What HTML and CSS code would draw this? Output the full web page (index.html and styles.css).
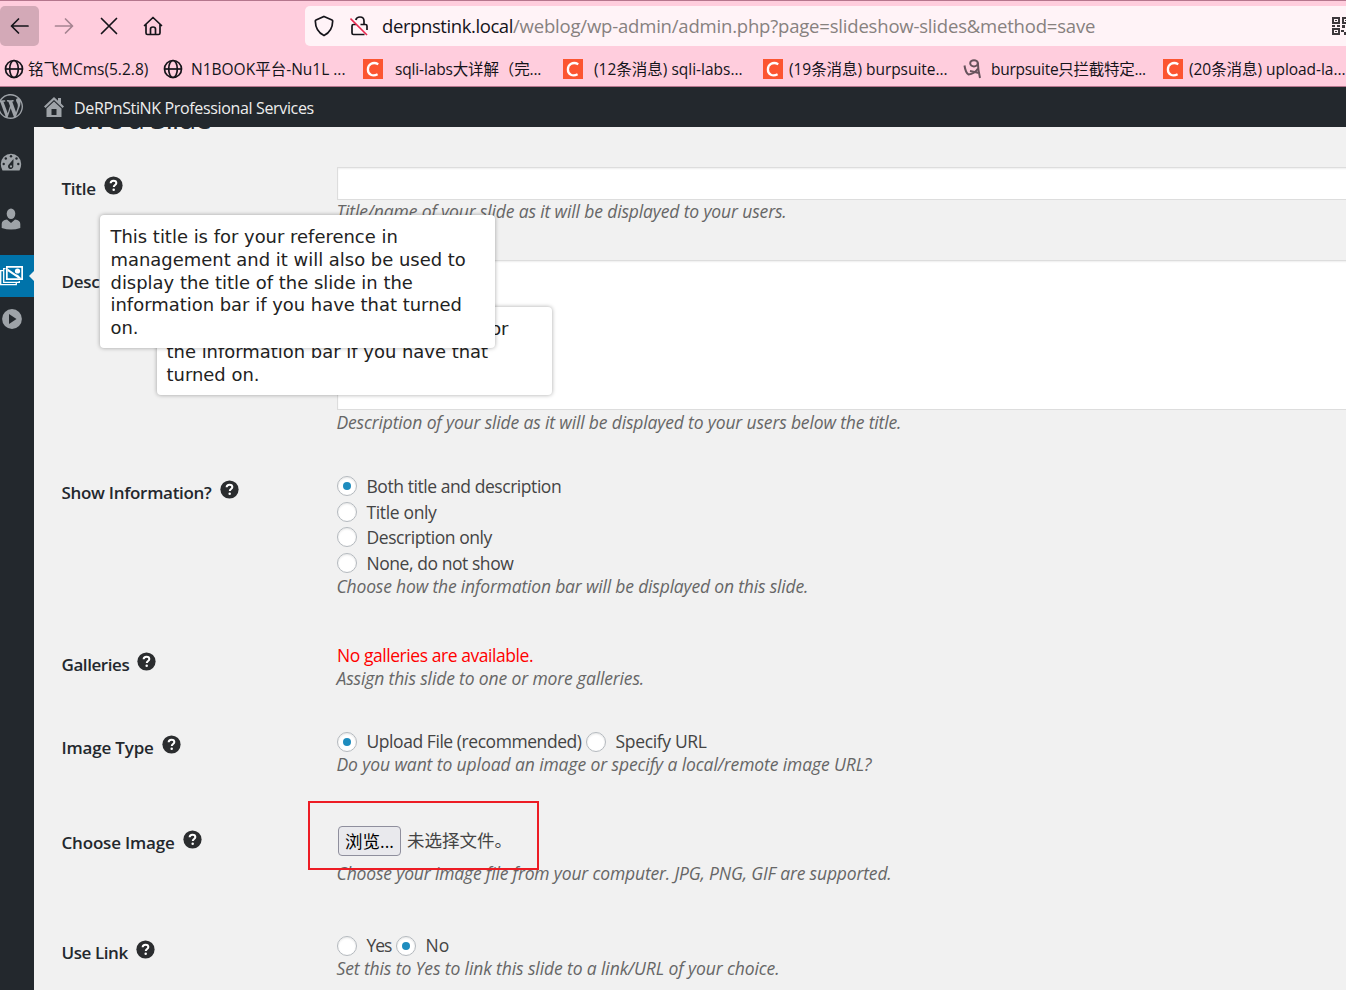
FILE: index.html
```html
<!DOCTYPE html>
<html lang="en">
<head>
<meta charset="utf-8">
<title>Save a Slide</title>
<link rel="stylesheet" href="styles.css">
</head>
<body>
<svg class="defs" width="0" height="0">
  <symbol id="help" viewBox="0 0 20 20"><circle cx="10" cy="10" r="9.6" fill="#2b2d2f"/><path d="M7 7.6C7 5.7 8.4 4.9 10 4.9s3 .9 3 2.5c0 2.100-2.700 2-2.700 4.200" fill="none" stroke="#fff" stroke-width="2.100"/><circle cx="10.200" cy="14.400" r="1.300" fill="#fff"/></symbol>
  <symbol id="globe" viewBox="0 0 20 20"><g fill="none" stroke="#15141a" stroke-width="1.700"><circle cx="10" cy="10" r="8.500"/><ellipse cx="10" cy="10" rx="4.300" ry="8.500"/><path d="M1.500 10h17"/></g></symbol>
  <symbol id="csdn" viewBox="0 0 20 20"><path fill="#fc5531" d="M0 0h20v20H0z"/><path d="M15.300 5.200C10 2.300 4.900 5.200 4.900 10.500c0 5 4.700 7.400 9.700 4.800" fill="none" stroke="#fff" stroke-width="2.300"/></symbol>
</svg>
<header class="browser">
  <div class="toolbar">
    <span class="tool back"><svg width="20" height="20" viewBox="0 0 20 20"><path d="M18 10H1.500m7-7-7 7 7 7"/></svg></span>
    <span class="tool forward"><svg width="20" height="20" viewBox="0 0 20 20"><path d="M1.500 10h17m-7-7 7 7-7 7"/></svg></span>
    <span class="tool stop"><svg width="20" height="20" viewBox="0 0 20 20"><path d="m2.500 2.500 15 15m0-15-15 15"/></svg></span>
    <span class="tool home"><svg width="20" height="20" viewBox="0 0 20 20"><path d="M1.500 9.500 10 1.500l8.500 8M3 8.500V17q0 1.500 1.500 1.500h11Q17 18.500 17 17V8.500M7.500 18v-5q0-2 2.500-2t2.500 2v5"/></svg></span>
    <div class="urlbar">
      <svg class="shield" width="20" height="22" viewBox="0 0 20 22"><path d="M10 1.500 18 5q.7.300.7 1-.2 10.500-8.700 14.500Q1.500 16.500 1.300 6q0-.700.700-1z"/></svg>
      <svg class="lock" width="20" height="22" viewBox="0 0 20 22"><path d="M5.800 5Q6.500 2 10 2q4 0 4 4v3.500M10.500 9.500h5q1.500 0 1.500 1.500v4M14.500 19.500h-11Q2 19.500 2 18v-7q0-1.500 1.500-1.500H6"/><path class="slash" d="m.5 3.500 16.500 16.500"/></svg>
      <span class="url"><b>derpnstink.local</b>/weblog/wp-admin/admin.php?page=slideshow-slides&amp;method=save</span>
      <svg class="qr" width="20" height="18" viewBox="0 0 20 18"><path fill="none" stroke="#3c383b" stroke-width="2" d="M1 1h6v5H1zM11 1h6v5h-6zM1 12h6v5H1z"/><path fill="#3c383b" d="M3 3h2v1H3zM13 3h2v1h-2zM3 14h2v1H3zM0 8h3v2H0zM5 8h3v2H5zM10 8h3v3h-3zM14 10h3v3h-3zM9 13h3v2H9zM12 15h3v3h-3z"/></svg>
    </div>
  </div>
  <nav class="bookmarks">
    <a class="bm bm1"><svg width="20" height="20"><use href="#globe"/></svg><span>铭飞MCms(5.2.8)</span></a>
    <a class="bm bm2"><svg width="20" height="20"><use href="#globe"/></svg><span>N1BOOK平台-Nu1L ...</span></a>
    <a class="bm bm3"><svg width="20" height="20"><use href="#csdn"/></svg><span>sqli-labs大详解（完...</span></a>
    <a class="bm bm4"><svg width="20" height="20"><use href="#csdn"/></svg><span>(12条消息) sqli-labs...</span></a>
    <a class="bm bm5"><svg width="20" height="20"><use href="#csdn"/></svg><span>(19条消息) burpsuite...</span></a>
    <a class="bm bm6"><svg width="20" height="20" viewBox="0 0 20 20"><g fill="none" stroke="#66535c" stroke-width="2"><path d="M1.500 6.500Q2.500 13.500 5.500 15.500q6-.5 9.500-6"/><ellipse cx="11" cy="4.300" rx="3.800" ry="3.100"/><path d="M14.800 3.500q.3 8 2.200 15.500M7 12l9 2"/></g></svg><span>burpsuite只拦截特定...</span></a>
    <a class="bm bm7"><svg width="20" height="20"><use href="#csdn"/></svg><span>(20条消息) upload-la...</span></a>
  </nav>
</header>
<div class="adminbar">
  <svg class="wp" width="25" height="25" viewBox="0 0 20 20"><path d="M20 10c0-5.510-4.490-10-10-10C4.480 0 0 4.490 0 10c0 5.520 4.480 10 10 10 5.510 0 10-4.480 10-10zM7.780 15.370L4.370 6.220c.55-.02 1.170-.08 1.170-.08.5-.06.44-1.130-.06-1.110 0 0-1.450.11-2.370.11-.18 0-.37 0-.58-.01C4.120 2.690 6.870 1.110 10 1.110c2.330 0 4.450.87 6.050 2.340-.68-.11-1.650.39-1.650 1.580 0 .74.45 1.360.9 2.100.35.61.55 1.360.55 2.460 0 1.490-1.400 5-1.400 5l-3.030-8.370c.54-.02.82-.17.82-.17.5-.05.44-1.250-.06-1.220 0 0-1.440.12-2.380.12-.87 0-2.330-.12-2.330-.12-.5-.03-.56 1.200-.06 1.220l.92.08 1.260 3.410zM17.410 10c.24-.64.74-1.870.43-4.250.7 1.290 1.050 2.710 1.050 4.250 0 3.290-1.730 6.240-4.400 7.780.97-2.590 1.940-5.200 2.920-7.780zM6.100 18.090C3.120 16.650 1.110 13.530 1.110 10c0-1.300.23-2.480.72-3.590C3.250 10.300 4.670 14.200 6.100 18.090zm4.030-6.630l2.580 6.980c-.86.29-1.760.45-2.710.45-.79 0-1.570-.11-2.290-.33.81-2.380 1.620-4.740 2.420-7.100z"/></svg>
  <svg class="house" width="20" height="20" viewBox="0 0 20 20"><path d="M10 0 0 9.500l1.500 1.500L10 3l8.500 8L20 9.500l-3-3V1h-3v2.800z"/><path fill-rule="evenodd" d="M10 4.500 2.500 11.500V20h15v-8.500zM7.500 12h5v6h-5z"/></svg>
  <span class="site">DeRPnStiNK Professional Services</span>
</div>
<div class="layout">
  <aside class="menu">
    <span class="item dash"><svg width="22" height="18" viewBox="0 0 22 18"><path fill="#9ea3a8" d="M2.500 17.500Q.8 14.500.8 11a10.200 10.200 0 0 1 20.400 0q0 3.500-1.700 6.500z"/><g fill="#23282d"><circle cx="11" cy="3.300" r="1.200"/><circle cx="5.800" cy="5.500" r="1.200"/><circle cx="3.700" cy="11" r="1.200"/><circle cx="18.300" cy="11" r="1.200"/><circle cx="16.500" cy="5.500" r="1.200"/><path d="m13.500 6-.2 8a2.700 2.700 0 1 1-4.500-2.600z"/></g><circle cx="11" cy="13.400" r="1.100" fill="#9ea3a8"/></svg></span>
    <span class="item user"><svg width="20" height="22" viewBox="0 0 20 22"><g fill="#9ea3a8"><ellipse cx="10" cy="5.700" rx="4.300" ry="5.200"/><path d="M.7 20v-4q0-4 5.300-4.500l4 3.500 4-3.500q5.300.5 5.300 4.500v4q-9 3-18.600 0z"/></g></svg></span>
    <span class="item current"><svg width="24" height="20" viewBox="0 0 24 20"><path fill="none" stroke="#fff" stroke-width="1.300" d="M3 4.700H.7v14h15.600V17M5.500 2.700H3.700v13.600h15.600V15"/><path fill="#fff" fill-rule="evenodd" d="M6 0h17v14H6zM7.700 1.700v10.600h13.600V1.700z"/><circle cx="17.500" cy="5" r="2.600" fill="#fff"/><path fill="#fff" d="m7.500 2.500 8 5.500 2.500 1 3.500 3.500h-3L7.500 5z"/></svg></span>
    <span class="item play"><svg width="20" height="20" viewBox="0 0 20 20"><circle cx="10" cy="10" r="9.900" fill="#9ea3a8"/><path fill="#23282d" d="m7 5 7.500 5L7 15z"/></svg></span>
  </aside>
  <main class="content">
    <h1 class="heading">Save a Slide</h1>
    <div class="row r-title"><div class="label"><span class="l1">Title</span><svg class="help"><use href="#help"/></svg></div><div class="field"><div class="input"></div><em class="d1">Title/name of your slide as it will be displayed to your users.</em></div></div>
    <div class="row r-desc"><div class="label"><span class="l2">Description</span></div><div class="field"><div class="textarea"></div><em class="d2">Description of your slide as it will be displayed to your users below the title.</em></div></div>
    <div class="row r-info"><div class="label"><span class="l3">Show Information?</span><svg class="help"><use href="#help"/></svg></div><div class="field">
      <div class="option"><i class="radio on"></i><span class="o1">Both title and description</span></div>
      <div class="option"><i class="radio"></i><span class="o2">Title only</span></div>
      <div class="option"><i class="radio"></i><span class="o3">Description only</span></div>
      <div class="option"><i class="radio"></i><span class="o4">None, do not show</span></div>
      <em class="d3">Choose how the information bar will be displayed on this slide.</em></div></div>
    <div class="row r-gal"><div class="label"><span class="l4">Galleries</span><svg class="help"><use href="#help"/></svg></div><div class="field"><div class="error"><span>No galleries are available.</span></div><em class="d4">Assign this slide to one or more galleries.</em></div></div>
    <div class="row r-type"><div class="label"><span class="l5">Image Type</span><svg class="help"><use href="#help"/></svg></div><div class="field"><div class="inline"><i class="radio on"></i><span class="o5">Upload File (recommended)</span><i class="radio"></i><span class="o6">Specify URL</span></div><em class="d5">Do you want to upload an image or specify a local/remote image URL?</em></div></div>
    <div class="row r-file"><div class="label"><span class="l6">Choose Image</span><svg class="help"><use href="#help"/></svg></div><div class="field"><div class="file"><span class="browse">浏览...</span><span class="nofile">未选择文件。</span></div><em class="d6">Choose your image file from your computer. JPG, PNG, GIF are supported.</em></div></div>
    <div class="row r-link"><div class="label"><span class="l7">Use Link</span><svg class="help"><use href="#help"/></svg></div><div class="field"><div class="inline"><i class="radio"></i><span class="o7">Yes</span><i class="radio on"></i><span class="o8">No</span></div><em class="d7">Set this to Yes to link this slide to a link/URL of your choice.</em></div></div>
  </main>
</div>
<div class="tip tip-desc"><div class="tail">for</div>the information bar if you have that<br>turned on.</div>
<div class="tip tip-title">This title is for your reference in<br>management and it will also be used to<br>display the title of the slide in the<br>information bar if you have that turned<br>on.</div>
<div class="marker"></div>
</body>
</html>
```
FILE: styles.css
```css
* { box-sizing: border-box; }
body { margin: 0; width: 1346px; height: 990px; overflow: hidden; position: relative; background: #f1f1f1; color: #444; font: 17.5px/23px "Open Sans", "Noto Sans CJK SC", sans-serif; white-space: nowrap; }
svg { flex: none; display: block; }
.defs { position: absolute; }

.browser { height: 87px; background: #ffcddd; border-top: 1px solid #b5768d; border-bottom: 1px solid #b5768d; color: #15141a; overflow: hidden; }
.toolbar { display: flex; height: 50px; padding-top: 5px; }
.tool { height: 40px; flex: none; display: flex; align-items: center; justify-content: center; }
.tool path { fill: none; stroke: #15141a; stroke-width: 1.7; stroke-linecap: round; stroke-linejoin: round; }
.back { width: 39px; background: #d3a9b7; border-radius: 5px; }
.forward { width: 50px; }
.forward path { stroke: #a68491; }
.stop { width: 40px; }
.home { width: 48px; }
.urlbar { margin-left: 128px; width: 1060px; flex: none; height: 40px; background: #fff3f7; border-radius: 5px 0 0 5px; display: flex; align-items: center; padding-left: 9px; }
.shield path, .lock path { fill: none; stroke: #15141a; stroke-width: 1.7; }
.lock { margin-left: 16px; }
.urlbar .slash { stroke: #e8274e; stroke-width: 1.6; }
.url { margin-left: 12px; width: 950px; font-size: 18.5px; line-height: 40px; color: #87817f; letter-spacing: -.19px; }
.url b { font-weight: 400; color: #15141a; letter-spacing: -.41px; }

.bookmarks { display: flex; height: 36px; align-items: center; padding-left: 4px; font-size: 15.5px; }
.bm { display: flex; align-items: center; width: 200px; flex: none; gap: 8px; }
.bm1 { width: 159px; gap: 4px; }
.bm3 { gap: 12px; letter-spacing: -.15px; }
.bm4 { gap: 11px; }
.bm5, .bm7 { gap: 6px; letter-spacing: -.05px; }
.bm6 { letter-spacing: -.28px; }

.adminbar { height: 40px; background: #23282d; display: flex; align-items: center; color: #eee; font-size: 16px; position: relative; }
.adminbar svg { fill: #9ea3a8; }
.wp { margin: -2px 0 0 -2px; }
.house { margin-left: 21px; }
.site { margin: 3px 0 0 10px; letter-spacing: -.35px; }

.layout { display: flex; height: 863px; }
.menu { width: 34px; background: #23282d; }
.item { display: flex; align-items: center; height: 43px; }
.dash { margin-top: 13px; height: 44px; }
.user { margin-top: 13px; height: 44px; padding-left: 1px; }
.current { background: #0073aa; margin-top: 14px; height: 42px; position: relative; }
.current::after { content: ""; position: absolute; right: 0; top: 16px; border: 5px solid transparent; border-right-color: #f1f1f1; border-left: 0; }
.play { padding-left: 2px; }

.content { flex: 1; overflow: hidden; padding-left: 28px; }
.heading { margin: -30px 0 0; height: 70px; font-size: 30px; line-height: 41px; font-weight: 400; color: #23282d; letter-spacing: -1.28px; }
.row { display: flex; }
.label { width: 275px; flex: none; display: flex; gap: 8px; color: #23282d; font-weight: 600; font-size: 17px; }
.label span { display: block; margin-left: -.5px; }
.help { width: 19px; height: 19px; margin-top: -1px; }
.field { width: 1100px; flex: none; }
.field em { display: block; color: #666; width: max-content; margin-left: -.5px; }
.l1, .l2 { letter-spacing: -.25px; }
.l3 { letter-spacing: -.3px; }
.l4, .l7 { letter-spacing: -.42px; }
.l5, .l6 { letter-spacing: -.18px; }
.d1 { letter-spacing: -.14px; }
.d2 { letter-spacing: -.155px; }
.d3 { letter-spacing: -.18px; }
.d4 { letter-spacing: -.14px; }
.d5 { letter-spacing: -.1px; }
.d6 { letter-spacing: -.16px; }
.d7 { letter-spacing: -.11px; }
.o1, .o3, .o4, .error, .o5 { letter-spacing: -.44px; }
.o2, .o6 { letter-spacing: -.35px; }
.o7 { letter-spacing: -1px; }
.o8 { letter-spacing: 0; }
.input, .textarea { border: 1px solid #ddd; background: #fff; box-shadow: inset 0 1px 2px rgba(0,0,0,.07); }
.input { height: 33px; }
.textarea { height: 150px; margin-bottom: 1px; }
.r-title { height: 93px; }
.r-title .label { padding-top: 10px; }
.r-desc { height: 214px; }
.r-desc .label { padding-top: 10px; }
.r-info { height: 170px; }
.r-info .label { padding-top: 7px; }
.r-gal { height: 86px; }
.r-gal .label { padding-top: 9px; }
.r-type { height: 87px; }
.r-type .label { padding-top: 6px; }
.r-file { height: 117px; }
.r-file .label { padding-top: 14px; }
.r-link .label { padding-top: 7px; }
.option { display: flex; align-items: center; height: 25.8px; gap: 9.5px; }
.option span { padding-top: 1px; }
.r-info .option:first-child { margin-top: -1px; }
.r-info em { margin-top: -1px; }
.radio { width: 20px; height: 20px; flex: none; border: 1px solid #b4b9be; border-radius: 50%; background: #fff; box-shadow: inset 0 1px 2px rgba(0,0,0,.1); display: flex; align-items: center; justify-content: center; }
.radio.on::after { content: ""; width: 8px; height: 8px; border-radius: 50%; background: #1e8cbe; }
.inline, .error { display: flex; align-items: center; height: 23px; }
.inline span { margin: 0 4.500px 0 9.500px; }
.error { color: #f00; }
.file { display: flex; align-items: center; height: 46px; padding: 1px 0 0 1px; margin-bottom: -1px; gap: 6px; }
.browse { width: 63px; height: 30px; border: 1px solid #8f8f9d; border-radius: 4px; background: #e9e9ed; color: #000; text-align: center; line-height: 29px; }

.tip { position: absolute; width: 395px; padding: 11px 10.500px; background: #fff; border-radius: 4px; box-shadow: 0 0 4px rgba(0,0,0,.35); color: #222; font: 17.95px/22.75px "DejaVu Sans", sans-serif; }
.tip-title { left: 100px; top: 215px; height: 133px; }
.tip-desc { left: 157px; top: 307px; height: 88px; padding-left: 9.500px; }
.tail { width: 342px; text-align: right; }
.marker { position: absolute; left: 308px; top: 801px; width: 231px; height: 69px; border: 2px solid #ed1c24; }
```
